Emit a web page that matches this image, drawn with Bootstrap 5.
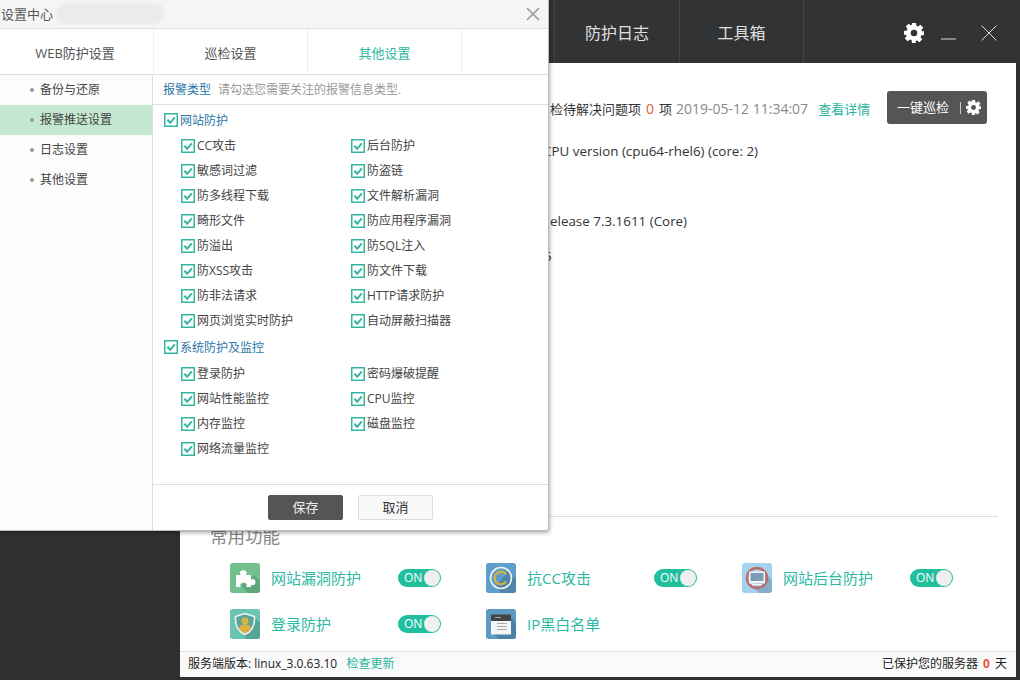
<!DOCTYPE html>
<html lang="zh">
<head>
<meta charset="utf-8">
<title>设置中心</title>
<link href="https://cdn.jsdelivr.net/npm/bootstrap@5.3.0/dist/css/bootstrap.min.css" rel="stylesheet">
<style>
html,body{margin:0;height:680px;overflow:hidden;background:#333;}
body{font-family:"Open Sans","Noto Sans CJK SC",sans-serif;font-size:12px;color:#333;}
.app{position:relative;width:1020px;height:680px;background:#303030;padding:0 3px 3px 3px;}
.app-top{height:63px;background:#323335;margin:0 -3px;padding-left:554px;color:#e0e0e0;}
.app-tab{width:125px;height:63px;border-left:1px solid #444;font-size:16px;line-height:66px;text-align:center;}
.app-tab.last{border-right:1px solid #444;}
.app-body{height:614px;}
.side-dark{width:177px;background:#303030;}
.main{width:836px;background:#fff;}
.main-inner{height:588px;padding-left:30px;padding-right:18px;}
.status{height:71px;padding-top:29px;padding-left:340px;font-size:14px;line-height:34px;color:#333;}
.status .cj{font-size:13px;}
.status .gray{color:#888;margin:0 10px 0 4px;}
.status .zero{color:#e8583a;margin:0 5px;}
.link-teal{color:#27b59d;text-decoration:none;}
.btn-scan{width:100px;height:33px;flex:none;background:#555;color:#fff;border-radius:3px;border:0;font-size:13px;line-height:33px;padding:0 6px 0 10px;margin:-1px 11px 0 auto;white-space:nowrap;}
.btn-scan svg{flex:none;}
.btn-scan i{display:block;flex:none;width:1px;height:12px;background:#ccc;margin:0 5px 0 auto;}
.info{padding-left:340px;font-size:13.4px;line-height:35px;height:382px;white-space:nowrap;color:#333;}
.info .cut-1{margin-left:-7px;}
.info .cut-2{margin-left:-6px;}
.section{border-top:1px solid #ddd;height:30px;padding-top:6px;font-size:17.5px;line-height:26px;color:#888;}
.features{padding-left:20px;padding-top:17px;row-gap:16px;}
.feat{width:256px;height:30px;}
.feat span.lbl{font-size:15px;color:#2cb9a2;margin-left:11px;width:127px;white-space:nowrap;padding-top:1px;}
.ficon{width:30px;height:30px;border-radius:2px;display:block;flex:none;}
.toggle{position:relative;width:43px;height:18px;border-radius:9px;background:#1fbf9f;color:#fff;font-size:12px;line-height:17px;padding-left:6px;margin-top:-1px;}
.toggle::after{content:"";position:absolute;right:1px;top:1px;width:16px;height:16px;border-radius:50%;background:#f0f0f0;}
.foot{height:26px;border-top:1px solid #ddd;background:#fafafa;padding:0 9px 0 8px;font-size:12px;line-height:23px;color:#222;}
.foot b{color:#e8583a;font-weight:700;margin:0 2px;}

.dialog{position:absolute;left:0;top:0;width:549px;height:531px;background:#fff;border-right:1px solid #bbb;border-bottom:1px solid #bbb;border-radius:0 0 3px 0;box-shadow:0 1px 5px rgba(0,0,0,.45);}
.d-head{height:29px;background:#f5f5f5;border-bottom:1px solid #ddd;padding-left:1px;font-size:13px;line-height:28px;color:#555;}
.blur{display:inline-block;width:108px;height:21px;border-radius:10px;background:#ebebeb;filter:blur(1px);margin:3px 0 0 3px;}
.d-x{margin-left:auto;margin-right:8px;margin-top:7px;display:block;}
.d-tabs{height:46px;background:#fff;border-bottom:1px solid #ddd;}
.d-tab{width:154px;height:45px;border-right:1px solid #f0f0f0;font-size:13px;line-height:49px;text-align:center;color:#555;}
.d-tab.first{padding-right:3px;}
.d-tab.on{color:#2cb9a2;}
.d-body{height:455px;}
.d-side{width:153px;background:#fcfcfc;border-right:1px solid #ddd;}
.d-side div{height:30px;font-size:12px;line-height:30px;padding-left:40px;color:#444;position:relative;}
.d-side div::before{content:"";position:absolute;left:30px;top:13px;width:4px;height:4px;border-radius:50%;background:#999;}
.d-side div.on{background:#c4e8cf;}
.d-main{width:395px;}
.d-title{height:30px;border-bottom:1px solid #ddd;padding-left:10px;line-height:29px;color:#999;font-size:12px;}
.d-title b{font-weight:400;color:#2a76a8;font-size:12px;margin-right:7px;}
.d-list{height:380px;padding:2px 0 0 11px;border-bottom:1px solid #ddd;}
.grp{height:26px;line-height:25px;color:#2a76a8;font-size:12px;}
.sub{padding:0 0 1px 17px;width:360px;}
.sub + .grp{margin-bottom:1px;}
.it{width:170px;height:25px;line-height:25px;color:#444;font-size:12px;}
.ck{width:14px;height:14px;display:block;flex:none;margin-right:2px;}
.d-foot{height:44px;padding:10px 0 0 115px;gap:15px;}
.bt{width:75px;height:25px;border-radius:2px;font-size:13px;line-height:23px;text-align:center;padding:0;}
.bt.dark{background:#555;color:#eee;border:1px solid #555;}
.bt.light{background:#f8f8f8;color:#333;border:1px solid #ddd;}
</style>
</head>
<body>
<svg width="0" height="0" class="d-none">
<defs>
<symbol id="ck" viewBox="0 0 14 14"><rect x=".75" y=".75" width="12.5" height="12.5" fill="#fff" stroke="#32b5a2" stroke-width="1.5"/><path d="M3.400 6.800l2.800 3 4.600-5.400" fill="none" stroke="#32b5a2" stroke-width="2"/></symbol>
<symbol id="gear" viewBox="0 0 20 20"><path fill="currentColor" fill-rule="evenodd" d="M8 0h4l.5 2.900 1.500.6 2.400-1.700 2.800 2.800-1.700 2.400.6 1.500L20 8v4l-2.900.5-.6 1.500 1.700 2.400-2.800 2.800-2.400-1.700-1.500.6L12 20H8l-.5-2.900-1.500-.6-2.400 1.700-2.800-2.800 1.700-2.400-.6-1.500L0 12V8l2.900-.5.6-1.500L1.800 3.600 4.600.8 7 2.500l.5-.2zM10 6.700a3.300 3.300 0 1 0 0 6.600 3.300 3.300 0 0 0 0-6.600z"/></symbol>
</defs>
</svg>
<div class="app">
  <div class="app-top d-flex">
    <div class="app-tab">防护日志</div>
    <div class="app-tab last">工具箱</div>
    <div class="d-flex align-items-center" style="margin-left:100px;color:#fff">
      <svg width="20" height="20" style="margin-top:3px"><use href="#gear"/></svg>
      <svg width="16" height="16" viewBox="0 0 16 16" style="margin:3px 0 0 17px"><path d="M0 14h15" stroke="#ddd" stroke-width="1"/></svg>
      <svg width="16" height="16" viewBox="0 0 16 16" style="margin:3px 0 0 24px"><path d="M.5.500l15 15M15.500.500l-15 15" stroke="#ddd" stroke-width="1"/></svg>
    </div>
  </div>
  <div class="app-body d-flex">
    <div class="side-dark"></div>
    <div class="main d-flex flex-column">
      <div class="main-inner">
        <div class="status d-flex">
          <div class="text-nowrap"><span class="cj">检待解决问题项</span><span class="zero">0</span><span class="cj">项</span><span class="gray">2019-05-12 11:34:07</span><a class="link-teal cj" href="#">查看详情</a></div>
          <button class="btn-scan d-flex align-items-center" type="button">一键巡检<i></i><svg width="15" height="15"><use href="#gear"/></svg></button>
        </div>
        <div class="info">
          <div class="cut-1">CPU version (cpu64-rhel6) (core: 2)</div>
          <div>&nbsp;</div>
          <div>elease 7.3.1611 (Core)</div>
          <div class="cut-2">5</div>
        </div>
        <div class="section">常用功能</div>
        <div class="features d-flex flex-wrap">
          <div class="feat d-flex align-items-center">
            <svg class="ficon" viewBox="0 0 30 30"><rect width="30" height="30" rx="2" fill="#72c08e"/><path d="M11 23l7 7h10a2 2 0 0 0 2-2V18l-6-6z" fill="#5fa67a"/><path d="M6 12h5c-1-1-1.500-2-.7-3.500 1-1.800 5-1.800 6 0 .8 1.500.3 2.500-.5 3.500h5.200v4.800c1-.8 2.200-1 3.300-.3 1.700 1.100 1.700 4.300 0 5.300-1.100.7-2.300.4-3.300-.3V24h-5c.7-1 1-2 .3-3-1-1.600-4.800-1.600-5.800 0-.6 1-.3 2 .5 3H6z" fill="#fff"/></svg>
            <span class="lbl">网站漏洞防护</span><span class="toggle">ON</span>
          </div>
          <div class="feat d-flex align-items-center">
            <svg class="ficon" viewBox="0 0 30 30"><rect width="30" height="30" rx="2" fill="#5d9fc8"/><path d="M10 24l6 6h12a2 2 0 0 0 2-2V16l-8-8z" fill="#4f86aa"/><circle cx="15" cy="15" r="10.500" fill="none" stroke="#f2f2f2" stroke-width="1.600"/><path d="M20 11.500a6.200 6.200 0 1 0 0 7" fill="none" stroke="#e0b330" stroke-width="2"/></svg>
            <span class="lbl">抗CC攻击</span><span class="toggle">ON</span>
          </div>
          <div class="feat d-flex align-items-center">
            <svg class="ficon" viewBox="0 0 30 30"><rect width="30" height="30" rx="2" fill="#a3d3ee"/><path d="M10 23l7 7h11a2 2 0 0 0 2-2V17l-6-6z" fill="#85aecb"/><circle cx="15" cy="15" r="10" fill="none" stroke="#c06a6a" stroke-width="2.500"/><rect x="7" y="8.500" width="16" height="12" fill="#f2f5f7"/><rect x="8.500" y="10" width="13" height="8" fill="#7b9db8"/><rect x="10" y="21" width="10" height="1.500" fill="#f2f5f7"/></svg>
            <span class="lbl">网站后台防护</span><span class="toggle">ON</span>
          </div>
          <div class="feat d-flex align-items-center">
            <svg class="ficon" viewBox="0 0 30 30"><rect width="30" height="30" rx="2" fill="#6cc5b3"/><path d="M14 27l3 3h11a2 2 0 0 0 2-2V14l-7-7z" fill="#55a596"/><path d="M15 4.500l9.500 3c.5 8-2 14.500-9.500 18-7.500-3.500-10-10-9.500-18z" fill="#5aa69a" stroke="#f2f2f2" stroke-width="1.600"/><circle cx="15" cy="12" r="3.400" fill="#e0b040"/><path d="M8.800 20c.5-3.500 2.500-4.500 6.200-4.500s5.700 1 6.200 4.500c-1.800 2-3.800 3.300-6.200 4.300-2.400-1-4.400-2.300-6.200-4.300z" fill="#e0b040"/></svg>
            <span class="lbl">登录防护</span><span class="toggle">ON</span>
          </div>
          <div class="feat d-flex align-items-center">
            <svg class="ficon" viewBox="0 0 30 30"><rect width="30" height="30" rx="2" fill="#5d9ac3"/><path d="M8 25l5 5h15a2 2 0 0 0 2-2V14l-6-7z" fill="#4d82a6"/><rect x="5" y="5.500" width="20" height="7" rx="1" fill="#444"/><rect x="5" y="12" width="20" height="13.500" fill="#f5f5f5"/><path d="M9 8.500h6M11 14.500h10M11 17.500h10M11 20.500h10" stroke="#aaa" stroke-width="1"/></svg>
            <span class="lbl">IP黑白名单</span>
          </div>
        </div>
      </div>
      <div class="foot d-flex justify-content-between">
        <div>服务端版本: linux_3.0.63.10 &nbsp;&nbsp;<a class="link-teal" href="#">检查更新</a></div>
        <div>已保护您的服务器 <b>0</b> 天</div>
      </div>
    </div>
  </div>

  <div class="dialog">
    <div class="d-head d-flex">
      <span>设置中心</span><span class="blur"></span>
      <svg class="d-x" width="14" height="14" viewBox="0 0 14 14"><path d="M1 1l12 12M13 1L1 13" stroke="#999" stroke-width="1.600"/></svg>
    </div>
    <div class="d-tabs d-flex">
      <div class="d-tab first">WEB防护设置</div>
      <div class="d-tab">巡检设置</div>
      <div class="d-tab on">其他设置</div>
    </div>
    <div class="d-body d-flex">
      <div class="d-side">
        <div>备份与还原</div>
        <div class="on">报警推送设置</div>
        <div>日志设置</div>
        <div>其他设置</div>
      </div>
      <div class="d-main">
        <div class="d-title"><b>报警类型</b>请勾选您需要关注的报警信息类型.</div>
        <div class="d-list">
          <div class="grp d-flex align-items-center"><svg class="ck"><use href="#ck"/></svg>网站防护</div>
          <div class="sub d-flex flex-wrap">
            <div class="it d-flex align-items-center"><svg class="ck"><use href="#ck"/></svg>CC攻击</div>
            <div class="it d-flex align-items-center"><svg class="ck"><use href="#ck"/></svg>后台防护</div>
            <div class="it d-flex align-items-center"><svg class="ck"><use href="#ck"/></svg>敏感词过滤</div>
            <div class="it d-flex align-items-center"><svg class="ck"><use href="#ck"/></svg>防盗链</div>
            <div class="it d-flex align-items-center"><svg class="ck"><use href="#ck"/></svg>防多线程下载</div>
            <div class="it d-flex align-items-center"><svg class="ck"><use href="#ck"/></svg>文件解析漏洞</div>
            <div class="it d-flex align-items-center"><svg class="ck"><use href="#ck"/></svg>畸形文件</div>
            <div class="it d-flex align-items-center"><svg class="ck"><use href="#ck"/></svg>防应用程序漏洞</div>
            <div class="it d-flex align-items-center"><svg class="ck"><use href="#ck"/></svg>防溢出</div>
            <div class="it d-flex align-items-center"><svg class="ck"><use href="#ck"/></svg>防SQL注入</div>
            <div class="it d-flex align-items-center"><svg class="ck"><use href="#ck"/></svg>防XSS攻击</div>
            <div class="it d-flex align-items-center"><svg class="ck"><use href="#ck"/></svg>防文件下载</div>
            <div class="it d-flex align-items-center"><svg class="ck"><use href="#ck"/></svg>防非法请求</div>
            <div class="it d-flex align-items-center"><svg class="ck"><use href="#ck"/></svg>HTTP请求防护</div>
            <div class="it d-flex align-items-center"><svg class="ck"><use href="#ck"/></svg>网页浏览实时防护</div>
            <div class="it d-flex align-items-center"><svg class="ck"><use href="#ck"/></svg>自动屏蔽扫描器</div>
          </div>
          <div class="grp d-flex align-items-center"><svg class="ck"><use href="#ck"/></svg>系统防护及监控</div>
          <div class="sub d-flex flex-wrap">
            <div class="it d-flex align-items-center"><svg class="ck"><use href="#ck"/></svg>登录防护</div>
            <div class="it d-flex align-items-center"><svg class="ck"><use href="#ck"/></svg>密码爆破提醒</div>
            <div class="it d-flex align-items-center"><svg class="ck"><use href="#ck"/></svg>网站性能监控</div>
            <div class="it d-flex align-items-center"><svg class="ck"><use href="#ck"/></svg>CPU监控</div>
            <div class="it d-flex align-items-center"><svg class="ck"><use href="#ck"/></svg>内存监控</div>
            <div class="it d-flex align-items-center"><svg class="ck"><use href="#ck"/></svg>磁盘监控</div>
            <div class="it d-flex align-items-center"><svg class="ck"><use href="#ck"/></svg>网络流量监控</div>
          </div>
        </div>
        <div class="d-foot d-flex">
          <button class="bt dark" type="button">保存</button>
          <button class="bt light" type="button">取消</button>
        </div>
      </div>
    </div>
  </div>
</div>
<script src="https://cdn.jsdelivr.net/npm/bootstrap@5.3.0/dist/js/bootstrap.bundle.min.js"></script>
</body>
</html>
